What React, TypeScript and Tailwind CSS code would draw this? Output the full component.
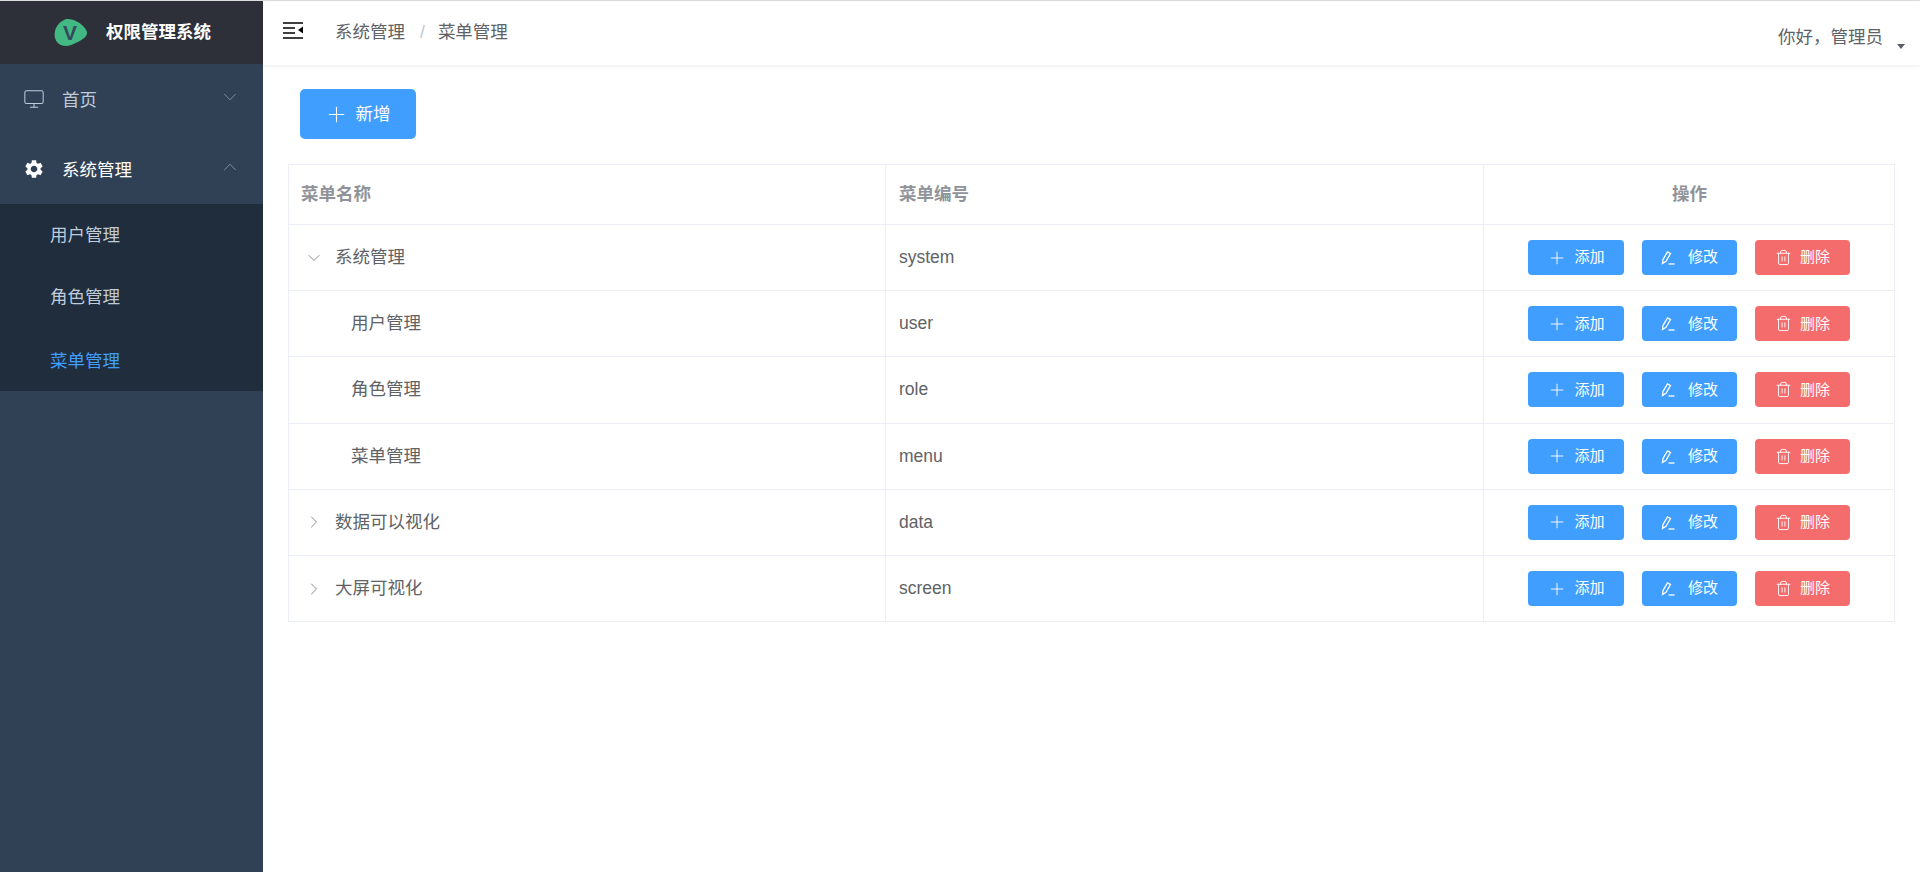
import { ChevronDown, ChevronRight, ChevronUp, Monitor, Plus, Trash2 } from "lucide-react";
import { MdSettings } from "react-icons/md";

const ROWS = [
  { name: "系统管理", code: "system", arrow: "down" },
  { name: "用户管理", code: "user", arrow: "none" },
  { name: "角色管理", code: "role", arrow: "none" },
  { name: "菜单管理", code: "menu", arrow: "none" },
  { name: "数据可以视化", code: "data", arrow: "right" },
  { name: "大屏可视化", code: "screen", arrow: "right" },
];

function Logo() {
  return (
    <div className="relative h-[30px] w-[36px]">
      <svg viewBox="0 0 36 30" className="h-[30px] w-[36px]">
        <path d="M12 1.500C17 0 25 3 30 8c4 4 5 7 3 10-3 4-10 7-15 9-5 2-11 1-14-3C1 20 1 15 3 10c2-4 5-7 9-8.500z" fill="#42b983" />
      </svg>
      <span className="absolute inset-0 flex items-center justify-center pr-[2px] text-[21px] font-bold text-[#35495e]">V</span>
    </div>
  );
}

function ToggleIcon() {
  return (
    <svg viewBox="0 0 20 17" className="h-[17px] w-5">
      <path d="M0 1h20M0 6h12M0 11h12M0 16h20" stroke="#000" strokeWidth="1.600" fill="none" />
      <path d="M20 4.500v7l-5-3.500z" fill="#000" />
    </svg>
  );
}

function EditIcon() {
  return (
    <svg viewBox="0 0 15 15" className="h-[15px] w-[15px]" fill="none" stroke="#fff" strokeWidth="1.300">
      <path d="M1.500 13.500l.5-4L6.500 1.800l3 1.800-4.500 7.800z" />
      <path d="M7.500 14h6" />
    </svg>
  );
}

function Sidebar() {
  return (
    <aside className="flex w-[263px] shrink-0 flex-col bg-[#304156]">
      <div className="flex h-[63px] items-center bg-[#2d3039] pl-[53px]">
        <Logo />
        <span className="ml-[17px] text-[17.500px] font-bold text-white">权限管理系统</span>
      </div>
      <div className="flex h-[70px] items-center pl-[23px] pr-[22px] text-[#bfcbd9]">
        <Monitor size={22} strokeWidth={1.100} />
        <span className="ml-[17px] pt-[2px] text-[17.500px]">首页</span>
        <ChevronDown size={22} strokeWidth={1} className="mt-[-4px] ml-auto text-[#8a96a5]" />
      </div>
      <div className="flex h-[70px] items-center pl-[23px] pr-[22px] text-white">
        <MdSettings size={22} />
        <span className="ml-[17px] pt-[2px] text-[17.500px]">系统管理</span>
        <ChevronUp size={22} strokeWidth={1} className="mt-[-4px] ml-auto text-[#8a96a5]" />
      </div>
      <div className="flex flex-col bg-[#1f2d3d] text-[17.500px]">
        <div className="flex h-[62px] items-center pt-px pl-[50px] text-[#bfcbd9]">用户管理</div>
        <div className="flex h-[62px] items-center pt-px pl-[50px] text-[#bfcbd9]">角色管理</div>
        <div className="flex h-[63px] items-center pt-[3px] pl-[50px] text-[#409eff]">菜单管理</div>
      </div>
    </aside>
  );
}

function Header() {
  return (
    <header className="flex h-[64px] items-start shadow-[0_1px_4px_rgba(0,21,41,0.08)]">
      <div className="mt-[21px] ml-5">
        <ToggleIcon />
      </div>
      <div className="mt-[19px] ml-8 flex text-[17.500px] leading-[24px] text-[#606266]">
        <span>系统管理</span>
        <span className="mr-[13px] ml-[15px] text-[#c0c4cc]">/</span>
        <span>菜单管理</span>
      </div>
      <div className="mt-[24px] ml-auto flex pr-[15px] text-[17.500px] leading-[24px] text-[#606266]">
        <span>你好，管理员</span>
        <span className="mt-[19px] ml-[14px] h-0 w-0 border-x-[4.500px] border-t-[5px] border-x-transparent border-t-[#5a5e66]" />
      </div>
    </header>
  );
}

function ActionButton({ className, label, icon }: { className: string; label: string; icon: React.ReactNode }) {
  return (
    <button className={`flex h-[35px] items-center justify-center rounded-[4px] text-[15px] text-white ${className}`}>
      {icon}
      <span>{label}</span>
    </button>
  );
}

function MenuTable() {
  return (
    <div className="mt-[25px] ml-[25px] w-[1607px] border border-[#ebeef5] text-[17.500px] text-[#606266]">
      <div className="grid h-[59px] grid-cols-[597px_598px_1fr] items-stretch font-bold text-[#909399]">
        <div className="flex items-center border-r border-[#ebeef5] pl-3">菜单名称</div>
        <div className="flex items-center border-r border-[#ebeef5] pl-[13px]">菜单编号</div>
        <div className="flex items-center justify-center pl-px">操作</div>
      </div>
      {ROWS.map((row) => (
        <div key={row.code} className="grid h-[66.200px] grid-cols-[597px_598px_1fr] border-t border-[#ebeef5]">
          <div className="flex items-center border-r border-[#ebeef5] pl-[15px]">
            {row.arrow === "down" && <ChevronDown size={20} strokeWidth={1.100} className="mr-[11px] text-[#7d8087]" />}
            {row.arrow === "right" && <ChevronRight size={20} strokeWidth={1.100} className="mr-[11px] text-[#7d8087]" />}
            {row.arrow === "none" && <span className="w-[47px]" />}
            <span className="pb-px">{row.name}</span>
          </div>
          <div className="flex items-center border-r border-[#ebeef5] pb-px pl-[13px] font-['Liberation_Sans',sans-serif]">{row.code}</div>
          <div className="grid grid-cols-[96px_95px_95px] content-center justify-center gap-x-[18px]">
            <ActionButton className="gap-[7px] bg-[#409eff]" label="添加" icon={<Plus size={20} strokeWidth={1.100} />} />
            <ActionButton className="gap-[12px] bg-[#409eff]" label="修改" icon={<EditIcon />} />
            <ActionButton className="gap-[8px] bg-[#f56c6c]" label="删除" icon={<Trash2 size={17} strokeWidth={1.300} />} />
          </div>
        </div>
      ))}
    </div>
  );
}

export default function App() {
  return (
    <div className="flex h-[872px] flex-col overflow-hidden bg-white font-['Liberation_Sans','Noto_Sans_CJK_SC',sans-serif]">
      <div className="h-px shrink-0 bg-[#ddd]" />
      <div className="flex min-h-0 flex-1">
        <Sidebar />
        <main className="min-w-0 flex-1">
          <Header />
          <div className="pt-[24px]">
            <button className="ml-[37px] flex h-[50px] w-[116px] items-center justify-center gap-[7px] rounded-[5px] bg-[#409eff] pr-[2px] text-[17.500px] text-white">
              <Plus size={25} strokeWidth={1} />
              <span>新增</span>
            </button>
            <MenuTable />
          </div>
        </main>
      </div>
    </div>
  );
}
